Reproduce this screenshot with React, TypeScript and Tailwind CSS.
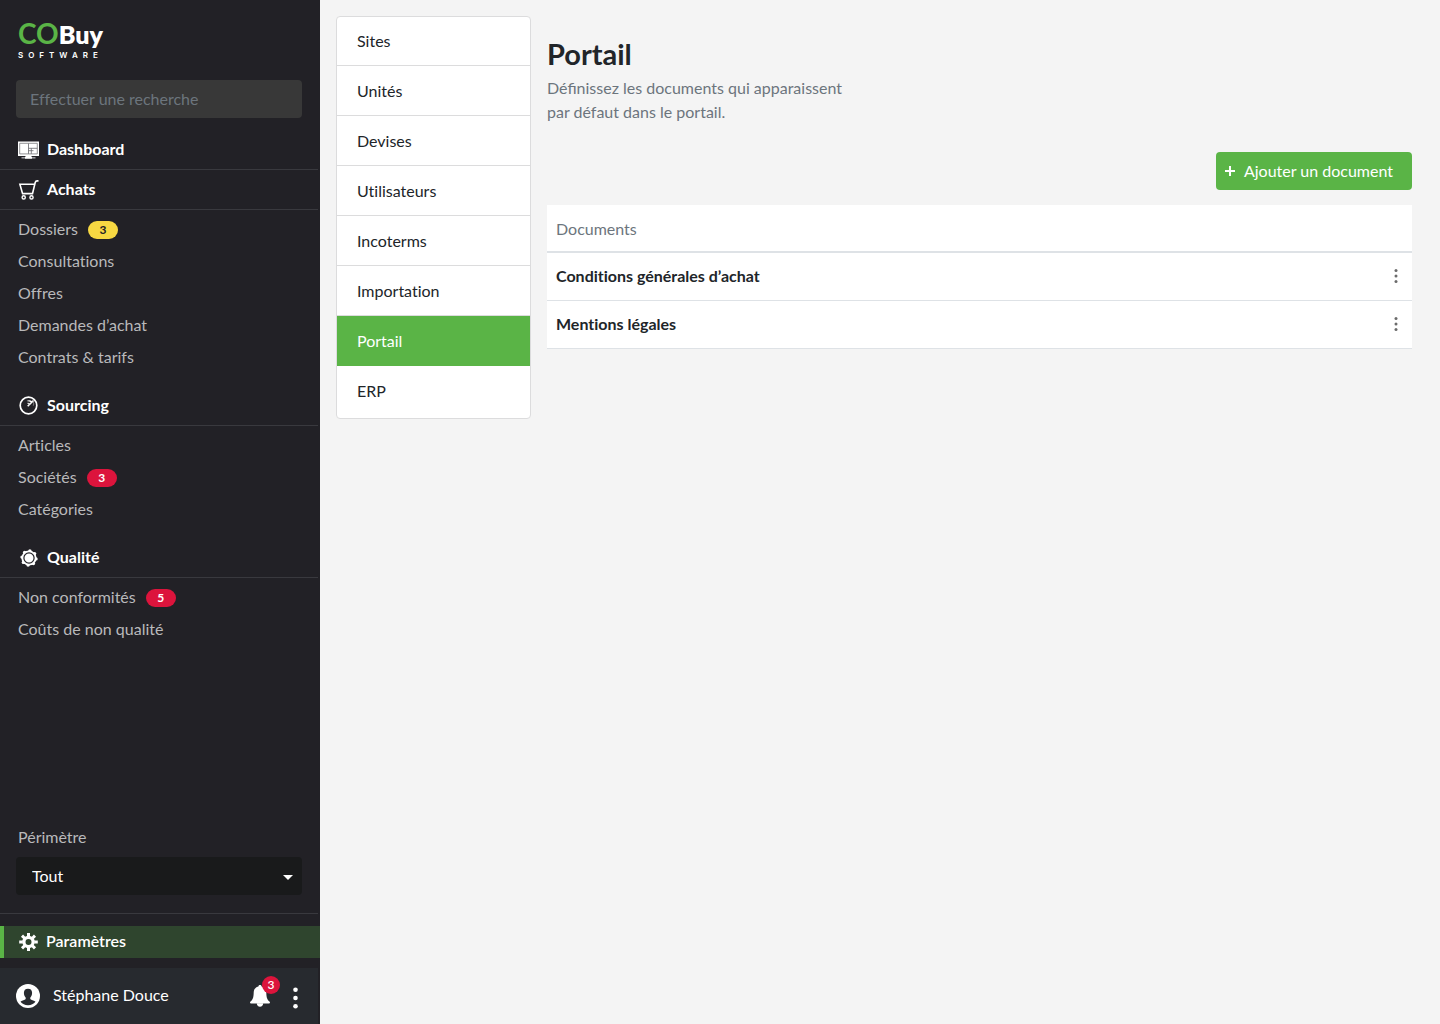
import React from "react";

type Tone = "yellow" | "red";
type Entry = { label: string; count?: number; tone?: Tone };
type Section = { title: string; icon: React.ReactNode; entries: Entry[] };

function DashboardIcon() {
  return (
    <svg width="21" height="18" viewBox="0 0 21 18" fill="none" aria-hidden="true">
      <rect y=".5" width="21" height="14.5" fill="#fff" />
      <path d="M1.700 2.300h17.600v10.600H1.700z" stroke="#77777b" strokeWidth=".8" />
      <path d="M10.500 2.500v10.300M10.500 7.300h8.800M13.300 7.300v5.500M10.500 9.700h5" stroke="#66666b" strokeWidth=".8" />
      <path d="M7.500 15h6v2h-6z" fill="#fff" />
      <path d="M3.500 16.800h14" stroke="#a9a9ac" strokeWidth="1.400" />
      <path d="M7 16.800h7" stroke="#fff" strokeWidth="1.800" />
    </svg>
  );
}

function CartIcon() {
  return (
    <svg width="21" height="20" viewBox="0 0 21 20" fill="none" stroke="#fff" strokeWidth="1.6" aria-hidden="true">
      <path d="M20.5.9h-1.3c-1.1 0-1.7.5-2 1.6l-2.7 11.1H4.6L1.9 4.3h14.6" />
      <circle cx="5.7" cy="17.4" r="1.6" strokeWidth="1.4" />
      <circle cx="13.5" cy="17.4" r="1.6" strokeWidth="1.4" />
    </svg>
  );
}

function RadarIcon() {
  return (
    <svg width="19" height="19" viewBox="0 0 19 19" fill="none" aria-hidden="true">
      <circle cx="9.5" cy="9.5" r="8.3" stroke="#fff" strokeWidth="1.7" />
      <path d="m8.7 10.3 5.8-5.8" stroke="#fff" strokeWidth="1.6" />
      <path d="M7.6 4.9c2.2-.9 4.3-.6 6 .5l-1.1 1.1c-1.3-.9-3-1.200-4.900-1.600z" fill="#fff" />
      <path d="M13.900 5.300c.9 1.300 1 2.900.4 4.300" stroke="#bbb" strokeWidth=".7" />
      <path d="M8.500 7.300c1.200-.1 2.200.3 2.800 1" stroke="#ddd" strokeWidth="1.200" />
    </svg>
  );
}

function BadgeIcon() {
  return (
    <svg width="18" height="18" viewBox="0 0 18 18" fill="#fff" aria-hidden="true">
      <circle cx="9" cy="9" r="7.600" />
      <circle cx="9.900" cy="2" r="1.700" />
      <circle cx="14.600" cy="4.600" r="1.700" />
      <circle cx="16" cy="9.900" r="1.700" />
      <circle cx="13.400" cy="14.600" r="1.700" />
      <circle cx="8.100" cy="16" r="1.700" />
      <circle cx="3.400" cy="13.400" r="1.700" />
      <circle cx="2" cy="8.100" r="1.700" />
      <circle cx="4.600" cy="3.400" r="1.700" />
      <circle cx="9" cy="9" r="5.100" fill="none" stroke="#222126" strokeWidth="1.200" />
    </svg>
  );
}

function GearIcon() {
  return (
    <svg width="19" height="18" viewBox="0 0 19 18" fill="none" stroke="#fff" aria-hidden="true">
      <circle cx="9.500" cy="9" r="4.600" strokeWidth="3.200" />
      <path
        d="M9.500 0v3.500M9.500 14.500V18M.2 9h3.600M15.200 9h3.600M3 2.600l2.600 2.600M13.400 12.800l2.600 2.600M16 2.600l-2.600 2.600M5.600 12.800 3 15.400"
        strokeWidth="3"
      />
    </svg>
  );
}

function UserIcon() {
  return (
    <svg width="24" height="24" viewBox="0 0 24 24" aria-hidden="true">
      <circle cx="12" cy="12" r="12" fill="#fff" />
      <path
        d="M12 4.700c-2.700 0-4.100 1.600-4.100 4.100 0 1.900.7 3.600 1.700 4.600.3.700.1 1.700-.5 2.200-1.100.8-3.500 1-4.600 2.200A9.600 9.600 0 0 0 12 21.200a9.600 9.600 0 0 0 7.500-3.400c-1.100-1.200-3.500-1.400-4.600-2.200-.6-.5-.8-1.500-.5-2.200 1-1 1.700-2.700 1.700-4.600 0-2.500-1.400-4.100-4.100-4.100z"
        fill="#272a2f"
      />
    </svg>
  );
}

function BellIcon() {
  return (
    <svg width="20" height="22" viewBox="0 0 20 22" fill="#fff" aria-hidden="true">
      <path d="M10 0c1 0 1.500.6 1.600 1.400 3 .7 4.600 3 4.700 6.100.1 5 .9 7.400 3.400 9.300.5.500.3 1.500-.4 1.600H.7c-.7-.1-.9-1.100-.4-1.600 2.500-1.900 3.300-4.300 3.400-9.300.1-3.100 1.700-5.400 4.700-6.100C8.500.6 9 0 10 0z" />
      <path d="M6.800 18.200h6.400c-.1 2-1.300 3.600-3.200 3.600s-3.100-1.600-3.200-3.600z" />
    </svg>
  );
}

const sections: Section[] = [
  {
    title: "Achats",
    icon: <CartIcon />,
    entries: [
      { label: "Dossiers", count: 3, tone: "yellow" },
      { label: "Consultations" },
      { label: "Offres" },
      { label: "Demandes d’achat" },
      { label: "Contrats & tarifs" },
    ],
  },
  {
    title: "Sourcing",
    icon: <RadarIcon />,
    entries: [{ label: "Articles" }, { label: "Sociétés", count: 3, tone: "red" }, { label: "Catégories" }],
  },
  {
    title: "Qualité",
    icon: <BadgeIcon />,
    entries: [{ label: "Non conformités", count: 5, tone: "red" }, { label: "Coûts de non qualité" }],
  },
];

const settings = ["Sites", "Unités", "Devises", "Utilisateurs", "Incoterms", "Importation", "Portail", "ERP"];
const documents = ["Conditions générales d’achat", "Mentions légales"];

function SectionTitle({ icon, title }: { icon: React.ReactNode; title: string }) {
  return (
    <h2 className="mr-0.5 flex h-10 items-center border-b border-[#39393e] pl-[18px] font-bold text-white">
      <a href="#" className="flex items-center gap-2">
        <span className="flex w-[21px] justify-center">{icon}</span>
        <span className="pb-0.5">{title}</span>
      </a>
    </h2>
  );
}

function Pill({ count, tone }: { count: number; tone?: Tone }) {
  return (
    <span
      className={
        tone === "yellow"
          ? "flex h-[18px] w-[30px] items-center justify-center rounded-full bg-[#f7d842] text-xs font-bold text-[#222126]"
          : "flex h-[18px] w-[30px] items-center justify-center rounded-full bg-[#dc143c] text-xs font-bold text-white"
      }
    >
      {count}
    </span>
  );
}

function Sidebar() {
  return (
    <aside className="flex w-80 shrink-0 flex-col bg-[#222126] text-[#b9b9bb]">
      <a href="#" aria-label="COBuy Software" className="ml-[18px] mt-5 flex h-10 flex-col text-white">
        <span className="text-[25px] font-extrabold leading-[26px]">
          <span className="text-[28px] font-bold text-[#5ab446]">CO</span>Buy
        </span>
        <span className="font-['Inter',sans-serif] text-[8px] font-semibold leading-4 tracking-[5px]">SOFTWARE</span>
      </a>
      <input
        type="search"
        aria-label="Effectuer une recherche"
        placeholder="Effectuer une recherche"
        className="ml-4 mr-[18px] mt-5 h-[38px] rounded bg-[#383838] px-3.5 pb-0.5 text-white outline-none placeholder:text-[#6c757d]"
      />
      <nav className="mt-3">
        <SectionTitle icon={<DashboardIcon />} title="Dashboard" />
        {sections.map((section) => (
          <section key={section.title}>
            <SectionTitle icon={section.icon} title={section.title} />
            <ul className="pb-3 pt-1">
              {section.entries.map((entry) => (
                <li key={entry.label}>
                  <a href="#" className="flex h-8 items-center gap-2.5 pl-[18px]">
                    <span className="pb-0.5">{entry.label}</span>
                    {entry.count !== undefined && <Pill count={entry.count} tone={entry.tone} />}
                  </a>
                </li>
              ))}
            </ul>
          </section>
        ))}
      </nav>
      <div className="mt-auto">
        <div className="mr-0.5 border-b border-[#39393e] pb-[18px] pl-4 pr-4">
          <label htmlFor="scope" className="mb-2 block pl-0.5">
            Périmètre
          </label>
          <div className="relative">
            <select
              id="scope"
              className="h-[38px] w-full appearance-none rounded bg-[#191a1b] pl-4 pr-8 text-white outline-none"
            >
              <option>Tout</option>
            </select>
            <svg
              className="pointer-events-none absolute right-[9px] top-[18px]"
              width="10"
              height="5"
              viewBox="0 0 10 5"
              aria-hidden="true"
            >
              <path d="M0 0h10L5 5z" fill="#fff" />
            </svg>
          </div>
        </div>
        <a
          href="#"
          className="mb-2.5 mt-3 flex h-8 items-center gap-2 border-l-4 border-[#5ab446] bg-[#2f452e] pl-[15px] font-semibold text-white"
        >
          <GearIcon />
          <span className="pb-0.5">Paramètres</span>
        </a>
        <div className="mr-0.5 flex h-14 items-center bg-[#272a2f] pl-4 pr-5 text-white">
          <UserIcon />
          <span className="ml-[13px] pb-0.5">Stéphane Douce</span>
          <button type="button" aria-label="Notifications" className="relative ml-auto">
            <BellIcon />
            <span className="absolute -top-[9px] left-3 flex size-[18px] items-center justify-center rounded-full bg-[#dc143c] text-xs font-semibold">
              3
            </span>
          </button>
          <button type="button" aria-label="Menu du compte" className="ml-[22px] mt-1">
            <svg width="6" height="22" viewBox="0 0 6 22" fill="#fff" aria-hidden="true">
              <circle cx="3.500" cy="2.700" r="2.300" />
              <circle cx="3.500" cy="11" r="2.300" />
              <circle cx="3.500" cy="19.300" r="2.300" />
            </svg>
          </button>
        </div>
      </div>
    </aside>
  );
}

export default function App() {
  return (
    <div className="flex min-h-screen bg-[#f4f4f4] font-['Lato',sans-serif] text-base text-[#212529] [font-variant-ligatures:no-common-ligatures]">
      <Sidebar />
      <nav
        aria-label="Paramètres"
        className="ml-4 mt-4 w-[195px] shrink-0 self-start overflow-hidden rounded border border-[#dcdcdd] bg-white pb-0.5"
      >
        {settings.map((item, index) => (
          <a
            key={item}
            href="#"
            className={
              item === "Portail"
                ? "flex h-[50px] items-center bg-[#5ab446] px-5 pb-px text-white"
                : item === "ERP"
                  ? "flex h-[50px] items-center px-5 pb-px"
                  : index === 0
                    ? "flex h-[49px] items-center border-b border-[#dcdcdd] px-5"
                    : "flex h-[50px] items-center border-b border-[#dcdcdd] px-5"
            }
          >
            {item}
          </a>
        ))}
      </nav>
      <main className="ml-4 mr-7 min-w-0 flex-1 pt-[34px]">
        <h1 className="mb-0.5 text-[29px] font-bold leading-10">Portail</h1>
        <p className="max-w-xs text-[#6c757d] [font-variant-ligatures:normal]">
          Définissez les documents qui apparaissent par défaut dans le portail.
        </p>
        <div className="mb-[15px] mt-7 flex justify-end">
          <button
            type="button"
            className="flex h-[38px] items-center gap-2 rounded bg-[#5ab446] pl-2 pr-[19px] text-white"
          >
            <svg width="12" height="12" viewBox="0 0 12 12" stroke="#fff" strokeWidth="2" aria-hidden="true">
              <path d="M6 1v10M1 6h10" />
            </svg>
            Ajouter un document
          </button>
        </div>
        <table className="w-full bg-white text-left">
          <thead>
            <tr className="h-[47px] border-b-2 border-[#dee2e6] text-[#6c757d]">
              <th scope="col" colSpan={2} className="px-[9px] pt-px font-normal">
                Documents
              </th>
            </tr>
          </thead>
          <tbody>
            {documents.map((name) => (
              <tr key={name} className="h-12 border-b border-[#dee2e6]">
                <td className="px-[9px] font-bold">{name}</td>
                <td className="w-8">
                  <button type="button" aria-label={`Actions : ${name}`} className="flex w-8 justify-center">
                    <svg width="4" height="14" viewBox="0 0 4 14" fill="#6b6b6b" aria-hidden="true">
                      <circle cx="2" cy="1.600" r="1.500" />
                      <circle cx="2" cy="7" r="1.500" />
                      <circle cx="2" cy="12.400" r="1.500" />
                    </svg>
                  </button>
                </td>
              </tr>
            ))}
          </tbody>
        </table>
      </main>
    </div>
  );
}
